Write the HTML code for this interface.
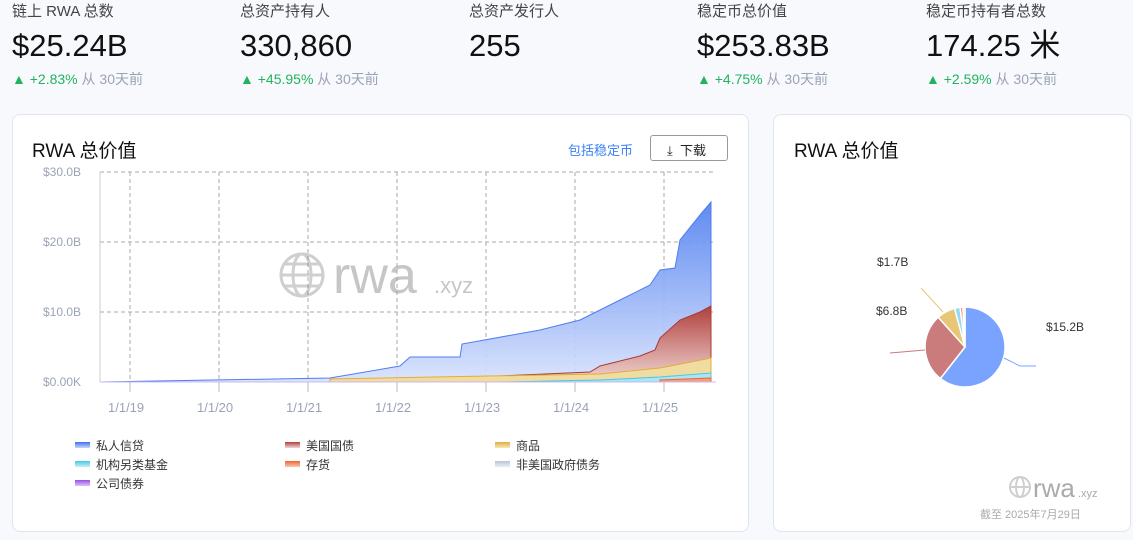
<!DOCTYPE html>
<html><head><meta charset="utf-8"><style>
*{margin:0;padding:0;box-sizing:border-box}
body{width:1133px;height:540px;background:#f7f9fd;font-family:"Liberation Sans","Noto Sans CJK SC",sans-serif;position:relative;overflow:hidden;color:#111}
.st{position:absolute;top:0}
.st .l{position:absolute;top:3px;font-size:15px;line-height:18px;color:#444;white-space:nowrap}
.st .v{position:absolute;top:28px;font-size:31px;line-height:36px;height:36px;color:#111;white-space:nowrap}
.st .c{position:absolute;top:70px;font-size:14px;line-height:18px;white-space:nowrap;color:#9aa3b5}
.st .c b{font-weight:normal;color:#22b35e}
.card{position:absolute;top:114px;height:418px;background:#fff;border:1px solid #dfe5f0;border-radius:8px}
.t{position:absolute;font-size:19px;color:#111}
.ax{position:absolute;font-size:12px;color:#9aa3b5}
.lg{position:absolute;font-size:12px;color:#333}
.lg i{display:inline-block;width:15px;height:6px;margin-right:6px;vertical-align:2px}
</style></head><body>
<div class="st" style="left:12px"><div class="l">链上 RWA 总数</div><div class="v">$25.24B</div><div class="c"><b>▲ +2.83%</b> 从 30天前</div></div>
<div class="st" style="left:240px"><div class="l">总资产持有人</div><div class="v">330,860</div><div class="c"><b>▲ +45.95%</b> 从 30天前</div></div>
<div class="st" style="left:469px"><div class="l">总资产发行人</div><div class="v">255</div></div>
<div class="st" style="left:697px"><div class="l">稳定币总价值</div><div class="v">$253.83B</div><div class="c"><b>▲ +4.75%</b> 从 30天前</div></div>
<div class="st" style="left:926px"><div class="l">稳定币持有者总数</div><div class="v">174.25 米</div><div class="c"><b>▲ +2.59%</b> 从 30天前</div></div>

<div class="card" style="left:12px;width:737px"></div>
<div class="card" style="left:773px;width:358px"></div>
<div class="t" style="left:32px;top:136px">RWA 总价值</div>
<div class="t" style="left:794px;top:136px">RWA 总价值</div>
<div style="position:absolute;left:568px;top:140px;font-size:13px;color:#3b82f6">包括稳定币</div>
<div style="position:absolute;left:650px;top:135px;width:78px;height:26px;border:1px solid #999;border-radius:3px;font-size:13px;color:#222;padding:4px 0 0 16px">⤓&nbsp; 下载</div>

<div class="ax" style="left:43px;top:165px">$30.0B</div>
<div class="ax" style="left:43px;top:235px">$20.0B</div>
<div class="ax" style="left:43px;top:305px">$10.0B</div>
<div class="ax" style="left:43px;top:375px">$0.00K</div>
<div class="ax" style="left:108px;top:400px;font-size:13px">1/1/19</div>
<div class="ax" style="left:197px;top:400px;font-size:13px">1/1/20</div>
<div class="ax" style="left:286px;top:400px;font-size:13px">1/1/21</div>
<div class="ax" style="left:375px;top:400px;font-size:13px">1/1/22</div>
<div class="ax" style="left:464px;top:400px;font-size:13px">1/1/23</div>
<div class="ax" style="left:553px;top:400px;font-size:13px">1/1/24</div>
<div class="ax" style="left:642px;top:400px;font-size:13px">1/1/25</div>

<svg style="position:absolute;left:0;top:0" width="1133" height="540">
<defs>
<linearGradient id="gb" x1="0" y1="0" x2="0" y2="1"><stop offset="0" stop-color="#4f7ff0"/><stop offset="1" stop-color="#d8e2fd"/></linearGradient>
<linearGradient id="gr" x1="0" y1="0" x2="0" y2="1"><stop offset="0" stop-color="#b0403c"/><stop offset="1" stop-color="#f0d6d4"/></linearGradient>
</defs>
<g stroke="#aaa" stroke-dasharray="4,3" fill="none">
<path d="M100 172H716M100 242H716M100 312H716"/>
<path d="M130 172V382M219 172V382M308 172V382M397 172V382M486 172V382M575 172V382M664 172V382"/>
</g>
<path d="M100 172V382" stroke="#ccc"/>
<g stroke="#bbb"><path d="M130 382v10M219 382v10M308 382v10M397 382v10M486 382v10M575 382v10M664 382v10"/></g>
<g opacity="0.35" fill="none" stroke="#777" stroke-width="3"><circle cx="302" cy="275" r="21"/><ellipse cx="302" cy="275" rx="9" ry="21"/><path d="M281 275h42M285 264h34M285 286h34"/></g>
<text x="333" y="293" font-family="Liberation Sans" font-size="52" fill="#999" opacity="0.55">rwa</text>
<text x="434" y="293" font-family="Liberation Sans" font-size="22" fill="#999" opacity="0.55">.xyz</text>
<path d="M100 382L330 378L400 366L410 357L460 357L462 344L540 330L580 320L620 300L650 285L660 270L675 268L680 240L700 215L711 202L711 382Z" fill="url(#gb)" opacity="0.9" stroke="#3d6ff0" stroke-width="1"/>
<path d="M330 382L330 381L500 376L590 372L600 366L640 356L655 350L660 338L680 320L700 312L711 306L711 382Z" fill="url(#gr)" stroke="#a83a36"/>
<path d="M330 382L330 379L600 374L660 368L711 358L711 382Z" fill="#f0dca0" stroke="#e2ad3a"/>
<path d="M500 382L600 380L660 377L711 373L711 382Z" fill="#a8e6f2" stroke="#47c8e8"/>
<path d="M660 382L660 380L711 378L711 382Z" fill="#f7a080" stroke="#f06430"/>
<path d="M100 382H716" stroke="#c8b8f0"/>
<g stroke="#fff" stroke-width="1.5">
<path d="M965 347L965 307A40 40 0 1 1 940.4 378.5Z" fill="#7aa3ff"/>
<path d="M965 347L940.4 378.5A40 40 0 0 1 938.2 317.3Z" fill="#c97c7b"/>
<path d="M965 347L938.2 317.3A40 40 0 0 1 954.6 308.4Z" fill="#e8c676"/>
<path d="M965 347L954.6 308.4A40 40 0 0 1 960.1 307.3Z" fill="#8ddcf3"/>
<path d="M965 347L960.1 307.3A40 40 0 0 1 962.9 307.1Z" fill="#f4876b"/>
<path d="M965 347L962.9 307.1A40 40 0 0 1 965 307Z" fill="#d0daea"/>
</g>
<path d="M1004 358L1020 366H1036" stroke="#7aa3ff" fill="none"/>
<path d="M925 350L890 353" stroke="#c97c7b" fill="none"/>
<path d="M943 312L921 288" stroke="#e8c676" fill="none"/>
<text x="1046" y="331" font-family="Liberation Sans" font-size="12" fill="#333">$15.2B</text>
<text x="876" y="315" font-family="Liberation Sans" font-size="12" fill="#333">$6.8B</text>
<text x="877" y="266" font-family="Liberation Sans" font-size="12" fill="#333">$1.7B</text>
<g opacity="0.4" fill="none" stroke="#888" stroke-width="2"><circle cx="1020" cy="487" r="10"/><ellipse cx="1020" cy="487" rx="4" ry="10"/><path d="M1010 487h20"/></g>
<text x="1033" y="497" font-family="Liberation Sans" font-size="26" fill="#aaa">rwa</text>
<text x="1078" y="497" font-family="Liberation Sans" font-size="11" fill="#aaa">.xyz</text>
</svg>
<div style="position:absolute;left:980px;top:506px;font-size:11px;color:#aaa">截至 2025年7月29日</div>
<div class="lg" style="left:75px;top:437px"><i style="background:linear-gradient(#3d6ff0,#c8d6fb)"></i>私人信贷</div>
<div class="lg" style="left:285px;top:437px"><i style="background:linear-gradient(#b0403c,#f0d6d4)"></i>美国国债</div>
<div class="lg" style="left:495px;top:437px"><i style="background:linear-gradient(#e2ad3a,#f6e6b8)"></i>商品</div>
<div class="lg" style="left:75px;top:456px"><i style="background:linear-gradient(#47c8e8,#c8f0f8)"></i>机构另类基金</div>
<div class="lg" style="left:285px;top:456px"><i style="background:linear-gradient(#f06430,#fbc8b0)"></i>存货</div>
<div class="lg" style="left:495px;top:456px"><i style="background:linear-gradient(#b8c6da,#e8eef6)"></i>非美国政府债务</div>
<div class="lg" style="left:75px;top:475px"><i style="background:linear-gradient(#9b4fe8,#dcc4f8)"></i>公司债券</div>
</body></html>
